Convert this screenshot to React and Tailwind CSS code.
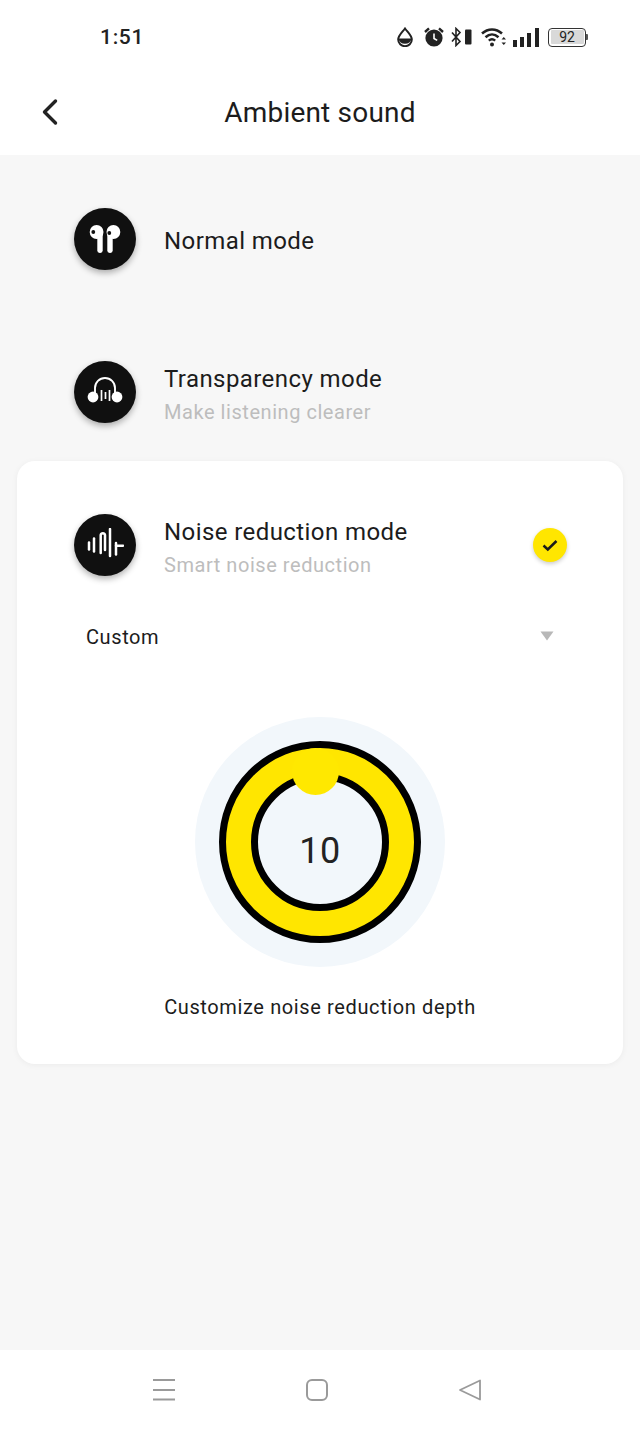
const Drop = () => (
  <svg width="16" height="20" viewBox="0 0 16 20" className="block">
    <path d="M8 1.5 C5.5 5 1.2 8.2 1.2 12.6 A6.8 6.6 0 0 0 14.8 12.6 C14.8 8.2 10.5 5 8 1.5 Z" fill="#fff" stroke="#222" strokeWidth="2" />
    <path d="M1.4 11.5 H14.6 A6.8 7 0 0 1 1.4 11.5 Z" fill="#222" />
  </svg>
);

const Alarm = () => (
  <svg width="20" height="20" viewBox="0 0 20 20" className="block">
    <circle cx="10" cy="11" r="8.6" fill="#222" />
    <path d="M10 6.5 V11.5 L13.2 13.4" fill="none" stroke="#fff" strokeWidth="1.6" />
    <path d="M1 5 L5 1.4 M19 5 L15 1.4" fill="none" stroke="#222" strokeWidth="2.4" />
  </svg>
);

const Bluetooth = () => (
  <svg width="21" height="20" viewBox="0 0 21 20" className="block">
    <path d="M1 5.5 L9 14.5 L5 18.5 V1.5 L9 5.5 L1 14.5" fill="none" stroke="#222" strokeWidth="1.6" />
    <rect x="14" y="2.5" width="6.5" height="15" rx="1" fill="#222" />
  </svg>
);

const Wifi = () => (
  <svg width="26" height="20" viewBox="0 0 26 20" className="block">
    <path d="M1 6.5 C7 1 15 1 21 6.5 M4.5 10.2 C8.5 6.6 13.5 6.6 17.5 10.2 M7.8 13.6 C10 11.8 12 11.8 14.2 13.6" fill="none" stroke="#222" strokeWidth="2.5" />
    <circle cx="11" cy="17.4" r="2" fill="#222" />
    <path d="M20.5 12.5 L22.8 10 L25 12.5 Z M20.5 15.5 L22.8 18 L25 15.5 Z" fill="#222" />
  </svg>
);

const Signal = () => (
  <svg width="26" height="19" viewBox="0 0 26 19" className="block">
    <rect x="0" y="12" width="4" height="7" fill="#222" />
    <rect x="7" y="9" width="4" height="10" fill="#222" />
    <rect x="14" y="5" width="4" height="14" fill="#222" />
    <rect x="22" y="0" width="4" height="19" fill="#222" />
  </svg>
);

const Battery = () => (
  <div className="flex items-center">
    <div className="w-[38px] h-[19px] rounded-[4px] border-[1.5px] border-[#333] p-[1.5px] flex">
      <div className="flex-1 bg-[#d9d9d9] rounded-[1px] flex items-center justify-center text-[14px] leading-none text-[#222]">92</div>
    </div>
    <div className="w-[2px] h-[6px] bg-[#555] rounded-r-[1px]" />
  </div>
);

const PodsIcon = () => (
  <svg width="34" height="34" viewBox="0 0 34 34" className="block">
    <circle cx="8.6" cy="10" r="6.9" fill="#fff" />
    <circle cx="25.4" cy="10" r="6.9" fill="#fff" />
    <rect x="9.3" y="10" width="5.4" height="21" rx="2.4" fill="#fff" />
    <rect x="19.3" y="10" width="5.4" height="21" rx="2.4" fill="#fff" />
    <circle cx="5.3" cy="10" r="1.9" fill="#111" />
    <circle cx="21.3" cy="11" r="1.9" fill="#111" />
  </svg>
);

const HeadphonesIcon = () => (
  <svg width="36" height="34" viewBox="0 0 36 34" className="block">
    <path d="M8 18 V13 A10 10 0 0 1 28 13 V18" fill="none" stroke="#fff" strokeWidth="1.9" />
    <circle cx="6" cy="22" r="5.4" fill="#fff" />
    <circle cx="30" cy="22" r="5.4" fill="#fff" />
    <path d="M14.5 15 V26 M18.5 17 V24 M22.5 15 V26" fill="none" stroke="#fff" strokeWidth="1.7" />
  </svg>
);

const WaveIcon = () => (
  <svg width="38" height="34" viewBox="0 0 38 34" className="block">
    <g fill="none" stroke="#fff" strokeLinecap="round" strokeWidth="2.5">
      <path d="M3 14.5 V21.5" />
      <path d="M8 10.5 V23.5" />
      <path d="M14.7 25 V7 A2.2 2.2 0 0 1 19 7 V22" />
      <path d="M24 1 V28" />
      <path d="M30 15 V26.5" />
      <path d="M30 17.7 H37" />
    </g>
  </svg>
);

const ModeRow = ({ icon, title, subtitle, right }) => (
  <div className="flex items-center h-[62px]">
    <div className="w-[62px] h-[62px] rounded-full bg-[#101010] shadow-[0_3px_6px_rgba(0,0,0,0.3)] flex items-center justify-center shrink-0">
      {icon}
    </div>
    <div className={subtitle ? "ml-[28px] flex-1 pt-[6px]" : "ml-[28px] flex-1 pt-[4px]"}>
      <div className="text-[24px] leading-[34px] tracking-[0.42px] text-[#1c1c1c]">{title}</div>
      {subtitle && <div className="text-[20px] leading-[32px] tracking-[0.55px] text-[#bdbdbd]">{subtitle}</div>}
    </div>
    {right}
  </div>
);

export default function App() {
  return (
    <div className="w-[640px] h-[1429px] flex flex-col bg-[#f7f7f7] overflow-hidden font-['Roboto',sans-serif]">
      <div className="bg-white h-[155px] shrink-0 flex flex-col">
        <div className="h-[74px] flex items-center justify-between pl-[100px] pr-[52px]">
          <div className="text-[21px] font-medium tracking-[0.7px] text-[#222] leading-none">1:51</div>
          <div className="flex items-center">
            <Drop />
            <div className="ml-[11px]"><Alarm /></div>
            <div className="ml-[7px]"><Bluetooth /></div>
            <div className="ml-[9px]"><Wifi /></div>
            <div className="ml-[6px]"><Signal /></div>
            <div className="ml-[9px]"><Battery /></div>
          </div>
        </div>
        <div className="relative h-[76px] flex items-center justify-center">
          <svg width="20" height="28" viewBox="0 0 20 28" className="absolute left-[40px] top-[24px]">
            <path d="M15.5 3 L4.5 14 L15.5 25" fill="none" stroke="#222" strokeWidth="3.4" strokeLinecap="round" strokeLinejoin="round" />
          </svg>
          <div className="text-[28px] tracking-[0.2px] leading-none text-[#1c1c1c] mt-[1px]">Ambient sound</div>
        </div>
      </div>

      <div className="flex-1 flex flex-col pt-[53px]">
        <div className="pl-[74px] pr-[72px] flex flex-col gap-[91px]">
          <ModeRow icon={<PodsIcon />} title="Normal mode" />
          <ModeRow icon={<HeadphonesIcon />} title="Transparency mode" subtitle="Make listening clearer" />
        </div>

        <div className="mx-[17px] mt-[38px] h-[603px] bg-white rounded-[18px] shadow-[0_1px_6px_rgba(0,0,0,0.05)] pt-[53px] flex flex-col">
          <div className="pl-[57px] pr-[56px]">
            <ModeRow
              icon={<WaveIcon />}
              title="Noise reduction mode"
              subtitle="Smart noise reduction"
              right={
                <div className="w-[34px] h-[34px] rounded-full bg-[#ffe600] shadow-[0_2px_4px_rgba(0,0,0,0.2)] flex items-center justify-center">
                  <svg width="18" height="14" viewBox="0 0 18 14" className="block">
                    <path d="M2.5 7.5 L6.8 11.5 L15.5 3" fill="none" stroke="#1a1a1a" strokeWidth="2.5" />
                  </svg>
                </div>
              }
            />
          </div>

          <div className="mt-[45px] pl-[69px] pr-[69px] flex items-center justify-between h-[32px]">
            <div className="text-[20px] tracking-[0.6px] leading-none text-[#1c1c1c]">Custom</div>
            <svg width="14" height="10" viewBox="0 0 14 10" className="block -mt-[3px]">
              <path d="M0.5 0.5 H13.5 L7 9.5 Z" fill="#b8b8b8" />
            </svg>
          </div>

          <div className="mt-[64px] flex justify-center">
            <div className="relative w-[250px] h-[250px] rounded-full bg-[#f2f7fb] flex items-center justify-center">
              <div className="w-[202px] h-[202px] rounded-full bg-[#ffe600] border-[7px] border-black flex items-center justify-center">
                <div className="w-[138px] h-[138px] rounded-full bg-[#f2f7fb] border-[7px] border-black flex items-center justify-center">
                  <div className="text-[36px] leading-none text-[#222] tracking-[0.5px] mt-[18px]">10</div>
                </div>
              </div>
              <div className="absolute left-[97px] top-[31px] w-[47px] h-[47px] rounded-full bg-[#ffe800]" />
            </div>
          </div>

          <div className="mt-[26px] text-center text-[20px] tracking-[0.62px] leading-[28px] text-[#1c1c1c]">Customize noise reduction depth</div>
        </div>
      </div>

      <div className="bg-white h-[79px] shrink-0 flex items-center justify-center gap-[129px] pr-[6px]">
        <svg width="24" height="24" viewBox="0 0 24 24" className="block">
          <path d="M1 2 H23 M1 12 H23 M1 21.5 H23" fill="none" stroke="#9a9a9a" strokeWidth="1.8" />
        </svg>
        <svg width="24" height="24" viewBox="0 0 24 24" className="block">
          <rect x="2" y="2" width="20" height="20" rx="5" fill="none" stroke="#9a9a9a" strokeWidth="2" />
        </svg>
        <svg width="24" height="24" viewBox="0 0 24 24" className="block">
          <path d="M22 2.5 V21.5 L2 12 Z" fill="none" stroke="#9a9a9a" strokeWidth="1.8" strokeLinejoin="round" />
        </svg>
      </div>
    </div>
  );
}
